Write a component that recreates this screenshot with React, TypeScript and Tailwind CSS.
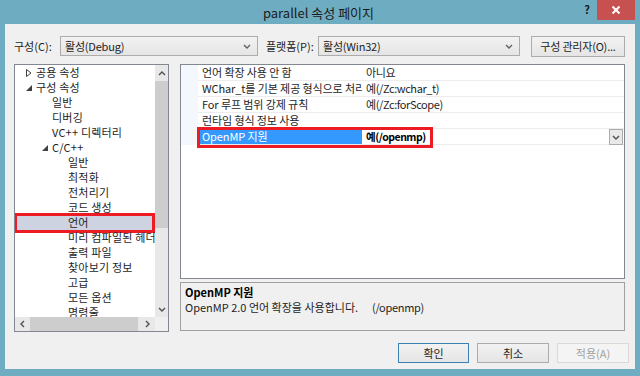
import React from 'react';

const FONT = { fontFamily: '"Noto Sans CJK KR", "Noto Sans", sans-serif' };

// tree rows: label, depth, arrow state
const treeRows = [
  { label: '공용 속성', level: 0, arrow: 'closed' },
  { label: '구성 속성', level: 0, arrow: 'open' },
  { label: '일반', level: 1 },
  { label: '디버깅', level: 1 },
  { label: 'VC++ 디렉터리', level: 1 },
  { label: 'C/C++', level: 1, arrow: 'open' },
  { label: '일반', level: 2 },
  { label: '최적화', level: 2 },
  { label: '전처리기', level: 2 },
  { label: '코드 생성', level: 2 },
  { label: '언어', level: 2, selected: true },
  { label: '미리 컴파일된 헤더', level: 2 },
  { label: '출력 파일', level: 2 },
  { label: '찾아보기 정보', level: 2 },
  { label: '고급', level: 2 },
  { label: '모든 옵션', level: 2 },
  { label: '명령줄', level: 2 },
];

const indent = ['pl-[11px]', 'pl-[27px]', 'pl-[43px]'];

const props = [
  { name: '언어 확장 사용 안 함', value: '아니요' },
  { name: 'WChar_t를 기본 제공 형식으로 처리', value: '예(/Zc:wchar_t)' },
  { name: 'For 루프 범위 강제 규칙', value: '예(/Zc:forScope)' },
  { name: '런타임 형식 정보 사용', value: '' },
  { name: 'OpenMP 지원', value: '예(/openmp)', selected: true },
];

const Chevron = ({ dir = 'down', className = '' }) => {
  const pts = {
    down: '1,3 4,6 7,3',
    up: '1,6 4,3 7,6',
    left: '5,1 2,4 5,7',
    right: '3,1 6,4 3,7',
  }[dir];
  return (
    <svg width="8" height="8" viewBox="0 0 8 8" className={className}>
      <polyline points={pts} fill="none" stroke="currentColor" strokeWidth="1.4" />
    </svg>
  );
};

const Arrow = ({ state }) => {
  if (!state) return <span className="w-[10px] shrink-0" />;
  return (
    <span className="w-[10px] shrink-0 flex items-center">
      {state === 'closed' ? (
        <svg width="6" height="8" viewBox="0 0 6 8">
          <polygon points="0.5,0.5 5,4 0.5,7.5" fill="none" stroke="#404040" strokeWidth="1" />
        </svg>
      ) : (
        <svg width="6" height="6" viewBox="0 0 6 6">
          <polygon points="6,0 6,6 0,6" fill="#404040" />
        </svg>
      )}
    </span>
  );
};

const Combo = ({ text, width }) => (
  <div className={`${width} h-[20px] flex items-center justify-between border border-[#acacac] bg-gradient-to-b from-[#f2f2f2] to-[#e5e5e5] pl-[4px] pr-[6px] text-[11px] text-[#1e1e1e]`}>
    <span className="tracking-[-0.2px]">{text}</span>
    <Chevron className="text-[#606060]" />
  </div>
);

export default function App() {
  return (
    <div className="w-[640px] h-[376px] bg-[#6eadc1] flex flex-col overflow-hidden" style={FONT}>
      {/* title bar */}
      <div className="h-[24px] flex items-start shrink-0">
        <div className="flex-1 pt-[3px] text-center text-[13px] text-[#1a1a1a] pl-[60px]">parallel 속성 페이지</div>
        <div className="w-[20px] pt-[1px] text-center text-[11px] font-bold text-[#1a1a1a]">?</div>
        <div className="w-[38px] h-[20px] bg-[#c75050] flex items-center justify-center mr-[5px]">
          <svg width="10" height="10" viewBox="0 0 10 10">
            <path d="M1.5 1.5 L8.5 8.5 M8.5 1.5 L1.5 8.5" stroke="#fff" strokeWidth="2" />
          </svg>
        </div>
      </div>

      {/* client */}
      <div className="ml-[5px] mr-[5px] h-[345px] bg-[#f0f0f0] flex flex-col px-[9px] pt-[12px] text-[11px] text-[#1e1e1e]">
        <div className="h-[20px] flex items-center shrink-0">
          <span className="w-[46px]">구성(C):</span>
          <Combo text="활성(Debug)" width="w-[198px]" />
          <span className="ml-[8px] w-[52px]">플랫폼(P):</span>
          <Combo text="활성(Win32)" width="w-[202px]" />
          <div className="ml-[11px] w-[94px] h-[21px] flex items-center justify-center border border-[#acacac] bg-gradient-to-b from-[#f2f2f2] to-[#e5e5e5] tracking-[-0.2px]">
            구성 관리자(O)...
          </div>
        </div>

        <div className="mt-[8px] flex gap-[11px]">
          {/* tree */}
          <div className="w-[155px] h-[268px] border border-[#828790] bg-white flex flex-col">
            <div className="flex h-[252px]">
              <div className="flex-1 overflow-hidden">
                {treeRows.map((r, i) => (
                  <div
                    key={i}
                    className={`relative h-[15px] flex items-center whitespace-nowrap ${r.selected ? 'ml-[2px] mr-[3px] bg-[#cdd3e0] pl-[41px]' : indent[r.level]}`}
                  >
                    <Arrow state={r.arrow} />
                    <span className="tracking-[0.2px]">{r.label}</span>
                    {r.selected && (
                      <div className="absolute left-[-3px] right-[-3px] top-[-2px] bottom-[-3px] border-[3px] border-[#ed1c24]" />
                    )}
                  </div>
                ))}
              </div>
              <div className="w-[13px] bg-[#e8e8e8] flex flex-col">
                <div className="h-[16px] flex items-center justify-center text-[#505050]">
                  <Chevron dir="up" />
                </div>
                <div className="h-[147px] bg-[#cdcdcd]" />
                <div className="flex-1" />
                <div className="h-[16px] flex items-center justify-center text-[#505050]">
                  <Chevron dir="down" />
                </div>
              </div>
            </div>
            <div className="flex h-[14px]">
              <div className="flex-1 bg-[#e8e8e8] flex items-center">
                <div className="w-[15px] flex justify-center text-[#505050]">
                  <Chevron dir="left" />
                </div>
                <div className="w-[108px] h-full bg-[#cdcdcd]" />
                <div className="flex-1 flex justify-center text-[#505050]">
                  <Chevron dir="right" />
                </div>
              </div>
              <div className="w-[13px] bg-[#f0f0f0]" />
            </div>
          </div>

          {/* right column */}
          <div className="w-[445px] flex flex-col gap-[3px]">
            <div className="h-[215px] border border-[#828790] bg-white">
              {props.map((p, i) => (
                <div key={i} className="relative h-[16px] flex">
                  <div className="w-[17px] bg-[#f4f7fc]" />
                  <div className={`w-[164px] pl-[4px] flex items-center border-b border-[#ececec] whitespace-nowrap overflow-hidden tracking-[-0.1px] ${p.selected ? 'bg-[#3399ff] text-white' : ''}`}>
                    {p.name}
                  </div>
                  <div className="flex-1 flex items-center justify-between pl-[4px] border-b border-[#ececec] whitespace-nowrap">
                    <span className={p.selected ? 'font-bold text-black text-[10.5px] tracking-[-0.5px]' : 'tracking-[-0.4px]'}>{p.value}</span>
                    {p.selected && (
                      <div className="w-[14px] h-[16px] mr-[1px] border border-[#acacac] bg-[#e9e9e9] flex items-center justify-center text-[#505050]">
                        <Chevron />
                      </div>
                    )}
                  </div>
                  {p.selected && (
                    <div className="absolute left-[16px] top-[-2px] w-[236px] h-[21px] border-[3px] border-[#ed1c24]" />
                  )}
                </div>
              ))}
            </div>
            <div className="h-[49px] border border-[#a0a0a0] px-[4px] pt-[2px] leading-[15px]">
              <div className="font-bold text-black">OpenMP 지원</div>
              <div className="flex">
                <span className="w-[187px]">OpenMP 2.0 언어 확장을 사용합니다.</span>
                <span className="tracking-[-0.3px]">(/openmp)</span>
              </div>
            </div>
          </div>
        </div>

        <div className="mt-[11px] -mr-[3px] flex justify-end gap-[8px]">
          <div className="w-[71px] h-[20px] flex items-center justify-center border border-[#3c7fb1] bg-gradient-to-b from-[#f2f2f2] to-[#e5e5e5]">확인</div>
          <div className="w-[72px] h-[20px] flex items-center justify-center border border-[#acacac] bg-gradient-to-b from-[#f2f2f2] to-[#e5e5e5]">취소</div>
          <div className="w-[72px] h-[20px] flex items-center justify-center border border-[#d9d9d9] bg-[#f4f4f4] text-[#a0a0a0]">적용(A)</div>
        </div>
      </div>
    </div>
  );
}
